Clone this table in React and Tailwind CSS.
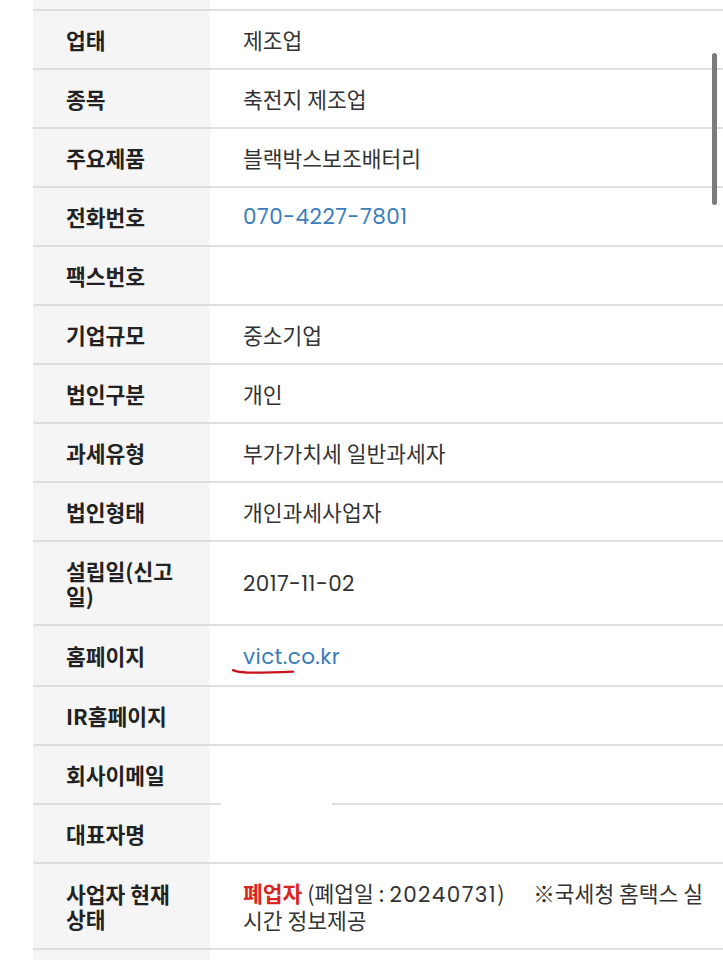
import React from "react";

const rows = [
  { label: "업태", value: "제조업" },
  { label: "종목", value: "축전지 제조업" },
  { label: "주요제품", value: "블랙박스보조배터리" },
  { label: "전화번호", value: "070-4227-7801", kind: "phone" },
  { label: "팩스번호", value: "" },
  { label: "기업규모", value: "중소기업" },
  { label: "법인구분", value: "개인" },
  { label: "과세유형", value: "부가가치세 일반과세자" },
  { label: "법인형태", value: "개인과세사업자" },
  { label: "설립일(신고일)", value: "2017-11-02", kind: "num" },
  { label: "홈페이지", value: "vict.co.kr", kind: "link" },
  { label: "IR홈페이지", value: "" },
  { label: "회사이메일", value: "", gap: true },
  { label: "대표자명", value: "" },
  { label: "사업자 현재 상태", value: "", kind: "status" },
];

const font = { fontFamily: '"Noto Sans CJK KR", "Noto Sans", sans-serif' };
const numFont = "font-['Poppins','Lato','Noto_Sans_CJK_KR',sans-serif]";

function Value({ row }) {
  if (row.kind === "phone") {
    return (
      <span className={`${numFont} text-[#3a7dbb] tracking-[0.5px]`}>{row.value}</span>
    );
  }
  if (row.kind === "num") {
    return <span className={`${numFont} text-[#333] tracking-[0.4px]`}>{row.value}</span>;
  }
  if (row.kind === "link") {
    return (
      <span className="relative inline-block">
        <span className={`${numFont} text-[#3a7dbb] tracking-[0.4px]`}>{row.value}</span>
        <svg
          className="absolute left-[-11px] top-[26px]"
          width="66"
          height="8"
          viewBox="0 0 66 8"
        >
          <path
            d="M1 2.2 Q6 4.4 16 4.6 Q34 4.8 61 3.6"
            stroke="#c8141e"
            strokeWidth="2.4"
            fill="none"
            strokeLinecap="round"
          />
        </svg>
      </span>
    );
  }
  if (row.kind === "status") {
    return (
      <span className="text-[#333]">
        <span className="font-bold text-[#d7261e]">폐업자</span> (폐업일 :{" "}
        <span className={`${numFont} tracking-[1.4px]`}>20240731</span>)
        {"\u00a0\u00a0\u00a0\u00a0\u00a0\u00a0"}※국세청 홈택스 실시간 정보제공
      </span>
    );
  }
  return <span className="text-[#333]">{row.value}</span>;
}

export default function App() {
  return (
    <div className="relative w-[723px] h-[960px] overflow-hidden bg-white" style={font}>
      <div className="pl-[33px]">
        {/* partial top row */}
        <div className="flex h-[11px] border-b-2 border-[#dedede]">
          <div className="w-[177px] bg-[#f5f5f5]" />
          <div className="flex-1 bg-white" />
        </div>
        {rows.map((row, i) => (
          <React.Fragment key={i}>
            <div
              className={`flex ${row.gap ? "" : "border-b-2 border-[#dedede]"}`}
            >
              <div className="w-[177px] shrink-0 bg-[#f5f5f5] pl-[33px] pr-[24px] py-4 text-[21.5px] leading-[25px] font-bold text-[#222] flex items-center">
                {row.label}
              </div>
              <div className="flex-1 bg-white pl-[33px] pr-[12px] py-4 text-[21.5px] leading-[25px] flex items-center">
                <Value row={row} />
              </div>
            </div>
            {row.gap && (
              <div className="flex h-[2px]">
                <div className="w-[188px] bg-[#dedede]" />
                <div className="w-[111px] bg-white" />
                <div className="flex-1 bg-[#dedede]" />
              </div>
            )}
          </React.Fragment>
        ))}
        <div className="flex h-[12px]">
          <div className="w-[177px] bg-[#f5f5f5]" />
          <div className="flex-1 bg-white" />
        </div>
      </div>
      <div className="h-[2px] w-full bg-[#c6c6c6]" />
      {/* scrollbar */}
      <div className="absolute left-[712px] top-[53px] h-[152px] w-[5px] rounded-full bg-[#7a7a7a]" />
    </div>
  );
}
